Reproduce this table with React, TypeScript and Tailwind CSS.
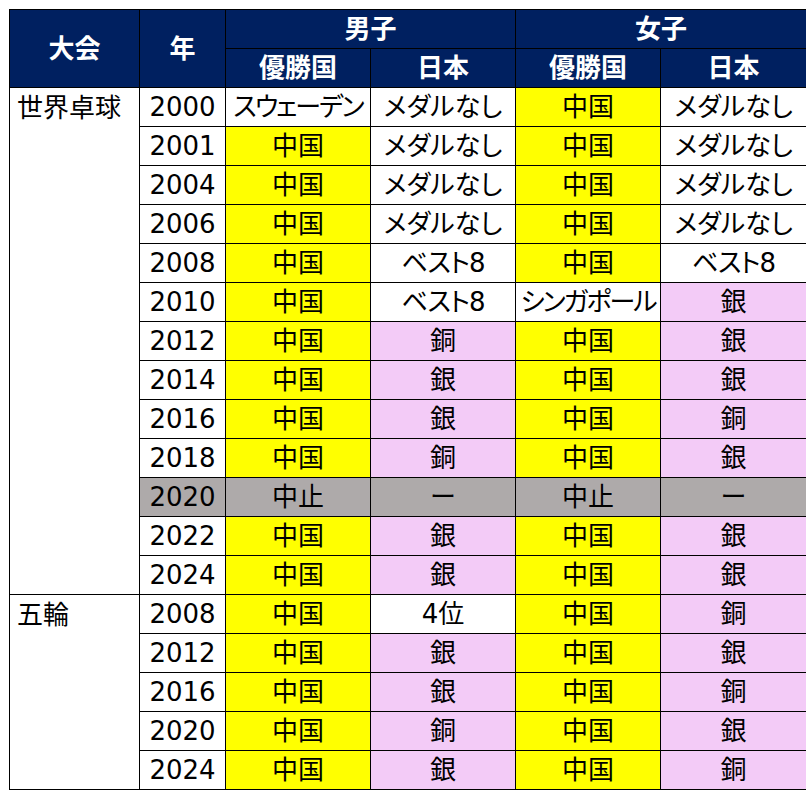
import React from "react";

type C = "Y" | "W" | "P" | "G";
type Cell = [string, C, string?];
type Row = { year: string; cells: Cell[]; gray?: boolean };

const bg: Record<C, string> = {
  Y: "bg-[#ffff00]",
  W: "bg-white",
  P: "bg-[#f3cbf7]",
  G: "bg-[#aeaaaa]",
};

const mn: Cell = ["メダルなし", "W"];
const cn: Cell = ["中国", "Y"];
const gin: Cell = ["銀", "P"];
const dou: Cell = ["銅", "P"];
const b8: Cell = ["ベスト8", "W", "tracking-[-1px]"];

const worlds: Row[] = [
  { year: "2000", cells: [["スウェーデン", "W", "tracking-[-2px]"], mn, cn, mn] },
  { year: "2001", cells: [cn, mn, cn, mn] },
  { year: "2004", cells: [cn, mn, cn, mn] },
  { year: "2006", cells: [cn, mn, cn, mn] },
  { year: "2008", cells: [cn, b8, cn, b8] },
  { year: "2010", cells: [cn, b8, ["シンガポール", "W", "tracking-[-2px]"], gin] },
  { year: "2012", cells: [cn, dou, cn, gin] },
  { year: "2014", cells: [cn, gin, cn, gin] },
  { year: "2016", cells: [cn, gin, cn, dou] },
  { year: "2018", cells: [cn, dou, cn, gin] },
  { year: "2020", gray: true, cells: [["中止", "G"], ["ー", "G"], ["中止", "G"], ["ー", "G"]] },
  { year: "2022", cells: [cn, gin, cn, gin] },
  { year: "2024", cells: [cn, gin, cn, gin] },
];

const olympics: Row[] = [
  { year: "2008", cells: [cn, ["4位", "W"], cn, dou] },
  { year: "2012", cells: [cn, gin, cn, gin] },
  { year: "2016", cells: [cn, gin, cn, dou] },
  { year: "2020", cells: [cn, dou, cn, gin] },
  { year: "2024", cells: [cn, gin, cn, dou] },
];

const td = "border border-black h-[39px] p-0 text-center align-middle whitespace-nowrap";
const th = "border border-black h-[39px] p-0 text-center align-middle bg-[#002060] text-white font-bold";

function Group({ name, rows }: { name: string; rows: Row[] }) {
  return (
    <>
      {rows.map((r, i) => (
        <tr key={name + r.year + i}>
          {i === 0 && (
            <td rowSpan={rows.length} className="border border-black bg-white p-0 pl-[7px] align-top text-left h-[39px]">
              <div className="h-[39px] flex items-center">{name}</div>
            </td>
          )}
          <td className={`${td} ${r.gray ? bg.G : "bg-white"}`}>{r.year}</td>
          {r.cells.map(([t, c, extra], j) => (
            <td key={j} className={`${td} ${bg[c]} ${extra ?? ""}`}>
              {t}
            </td>
          ))}
        </tr>
      ))}
    </>
  );
}

export default function App() {
  return (
    <div
      className="bg-white w-[806px] h-[790px] pl-[9px] pt-[9px] text-black text-[26px] leading-none [font-feature-settings:'palt']"
      style={{ fontFamily: '"DejaVu Sans", "Noto Sans CJK JP", sans-serif' }}
    >
      <table className="border-collapse table-fixed w-[797px] border border-black">
        <colgroup>
          <col className="w-[130px]" />
          <col className="w-[86px]" />
          <col className="w-[145px]" />
          <col className="w-[145px]" />
          <col className="w-[145px]" />
          <col className="w-[146px]" />
        </colgroup>
        <thead>
          <tr>
            <th rowSpan={2} className={th}>大会</th>
            <th rowSpan={2} className={th}>年</th>
            <th colSpan={2} className={th}>男子</th>
            <th colSpan={2} className={th}>女子</th>
          </tr>
          <tr>
            <th className={th}>優勝国</th>
            <th className={th}>日本</th>
            <th className={th}>優勝国</th>
            <th className={th}>日本</th>
          </tr>
        </thead>
        <tbody>
          <Group name="世界卓球" rows={worlds} />
          <Group name="五輪" rows={olympics} />
        </tbody>
      </table>
    </div>
  );
}
